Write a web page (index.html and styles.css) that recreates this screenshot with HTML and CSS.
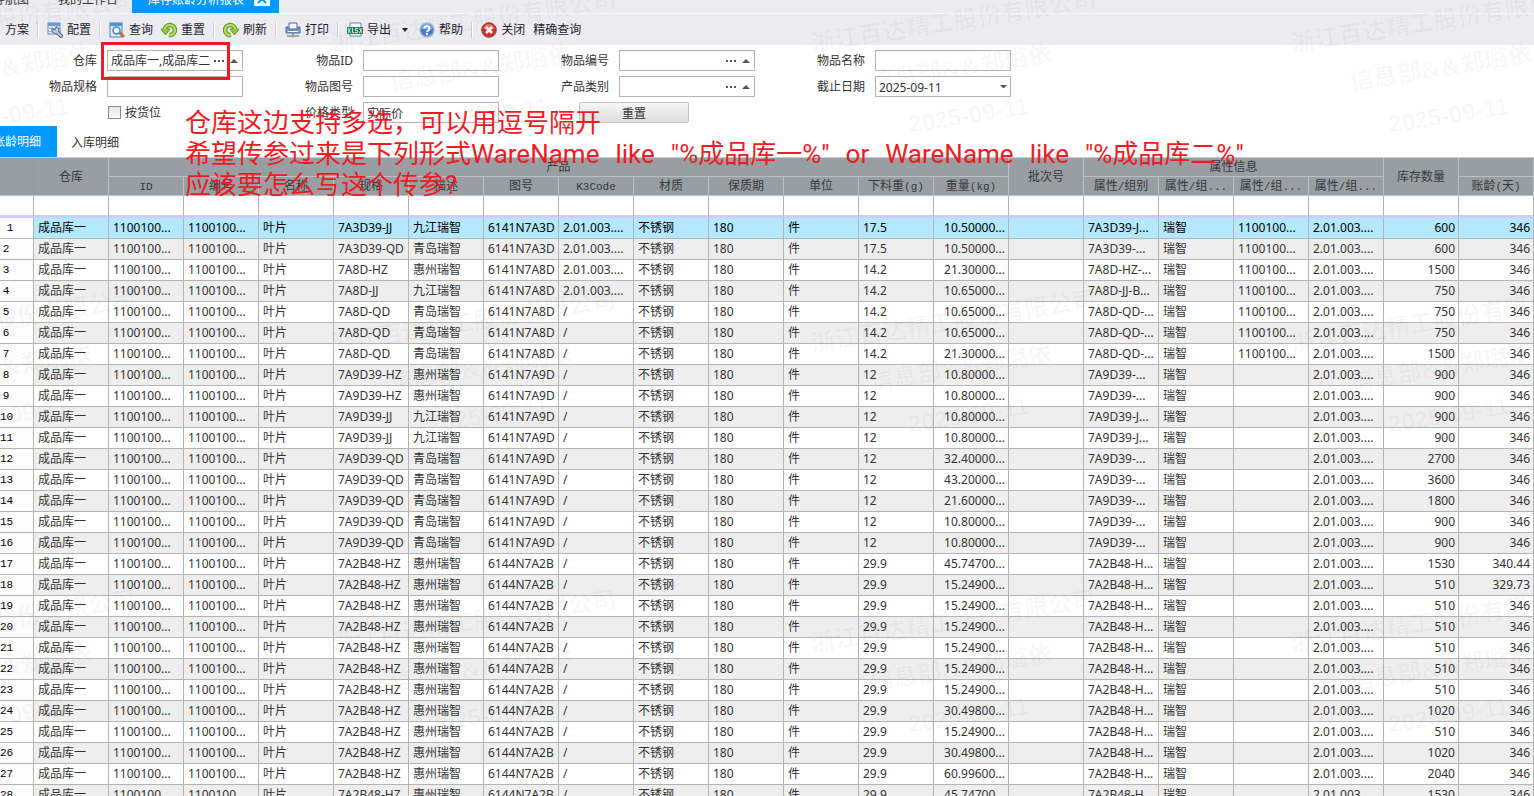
FILE: index.html
```
<!DOCTYPE html>
<html lang="zh-CN">
<head>
    <meta charset="UTF-8">
    <meta name="viewport" content="width=device-width, initial-scale=1.0">
    <title>库存账龄分析报表</title>
    <link rel="stylesheet" href="styles.css">
</head>
<body>
    <!-- Window tabs -->
    <nav class="window-tabs">
        <a href="#" class="window-tab">导航图</a>
        <a href="#" class="window-tab">我的工作台</a>
        <a href="#" class="window-tab active">库存账龄分析报表
            <svg class="icon" viewBox="0 0 16 16"><rect width="16" height="14" fill="#fff"/><path d="M4 3l8 8M12 3l-8 8" stroke="#0099ff" stroke-width="2"/></svg>
        </a>
    </nav>

    <!-- Toolbar -->
    <header class="toolbar">
        <button class="tool">方案</button>
        <span class="sep"></span>
        <button class="tool">
            <svg class="icon" viewBox="0 0 16 16"><rect x="1" y="1" width="12" height="11" fill="#eaf2fc" stroke="#7088b4"/><path d="M1 2.500h12" stroke="#6a9ade" stroke-width="3"/><path d="M1 6.500h12M1 9.500h12M5 3v9M9 3v9" stroke="#9db4d8"/><path d="M9 9l5 5" stroke="#5c6880" stroke-width="4" stroke-linecap="round"/><path d="M5 6l2 2 2-1V4.500a3.500 3.500 0 1 1-4 4z" fill="#c3d0e2" stroke="#5c6880"/><path d="M9 9l5 5" stroke="#b9c6da" stroke-width="2" stroke-linecap="round"/></svg>
            配置
        </button>
        <span class="sep"></span>
        <button class="tool">
            <svg class="icon" viewBox="0 0 16 16"><rect x="1" y="1" width="12" height="14" fill="#dcecfb" stroke="#4d80c0"/><path d="M1 2.500h12" stroke="#4d8fd8" stroke-width="3"/><path d="M11 11l3 3" stroke="#c07030" stroke-width="3" stroke-linecap="round"/><circle cx="7.500" cy="8.500" r="3.500" fill="#f1faff" stroke="#4888b8" stroke-width="1.500"/></svg>
            查询
        </button>
        <button class="tool">
            <svg class="icon" viewBox="0 0 16 16"><path d="M4 7a5 5 0 1 1 4 6" fill="none" stroke="#5c9420" stroke-width="4.500"/><path d="M0 7h9l-4.500 6z" fill="#8cc63c" stroke="#5c9420"/><path d="M4 8V7a5 5 0 1 1 4 6" fill="none" stroke="#b2dc60" stroke-width="2.500"/></svg>
            重置
        </button>
        <span class="sep"></span>
        <button class="tool">
            <svg class="icon" viewBox="0 0 16 16"><path d="M8 13a5 5 0 1 1 4-6" fill="none" stroke="#5c9420" stroke-width="4.500"/><path d="M7 7h9l-4.500 6z" fill="#8cc63c" stroke="#5c9420"/><path d="M8 13a5 5 0 1 1 4-6v1" fill="none" stroke="#b2dc60" stroke-width="2.500"/></svg>
            刷新
        </button>
        <span class="sep"></span>
        <button class="tool">
            <svg class="icon" viewBox="0 0 16 16"><path d="M4 1h8v6H4z" fill="#f6f9ff" stroke="#46659c"/><path d="M1 5h2v3h10V5h2v6H1z" fill="#8fabdc" stroke="#46659c"/><path d="M3 9.500h10" stroke="#fff"/><path d="M8 11v3M2 14h12" stroke="#7f8ea8" stroke-width="1.500"/><circle cx="8" cy="14" r="1.500" fill="#8bc34a"/></svg>
            打印
        </button>
        <span class="sep"></span>
        <button class="tool">
            <svg class="icon" viewBox="0 0 16 16"><path d="M3 1h11v13H3z" fill="#f8fbff" stroke="#5f86bf"/><rect y="5" width="16" height="7" fill="#128a5a"/><path d="M1 6l2.500 5M3.500 6L1 11M5.500 6v4.500h2M11 6.500H8.500v2h2v2H8M12.500 6l2.500 5M15 6l-2.500 5" fill="none" stroke="#fff" stroke-width=".8"/></svg>
            导出
        </button>
        <button class="tool-caret" aria-label="导出选项"><svg viewBox="0 0 6 4"><path d="M0 0h6L3 4z" fill="#1e1e2d"/></svg></button>
        <button class="tool">
            <svg class="icon" viewBox="0 0 16 16"><circle cx="8" cy="8" r="7" fill="#4a7fd0" stroke="#a9b9d2" stroke-width="1.500"/><path d="M2.500 7a5.500 5 0 0 1 11 0z" fill="#86aee8"/><path d="M5.500 6.500a2.500 2.300 0 1 1 3.500 2q-1 .5-1 1.500" fill="none" stroke="#fff" stroke-width="1.800"/><circle cx="8" cy="12" r="1.200" fill="#fff"/></svg>
            帮助
        </button>
        <span class="sep"></span>
        <button class="tool">
            <svg class="icon" viewBox="0 0 16 16"><circle cx="8" cy="8" r="7.300" fill="#d02c28" stroke="#a04040"/><path d="M2.500 7a5.500 5 0 0 1 11 0z" fill="#e4706a"/><path d="M5 5l6 6M11 5l-6 6" stroke="#fff" stroke-width="2.800"/></svg>
            关闭
        </button>
        <button class="tool">精确查询</button>
    </header>

    <!-- Query form -->
    <form class="filters">
        <div class="field">
            <label for="ware">仓库</label>
            <div class="box">
                <input type="text" id="ware" value="成品库一,成品库二">
                <button type="button" class="dots" aria-label="选择"><svg viewBox="0 0 12 2"><path d="M1 0h2v2H1zM5 0h2v2H5zM9 0h2v2H9z"/></svg></button>
                <button type="button" class="arrow" aria-label="收起"><svg viewBox="0 0 8 4"><path d="M0 4h8L4 0z"/></svg></button>
            </div>
        </div>
        <div class="field">
            <label for="goods-id">物品ID</label>
            <div class="box"><input type="text" id="goods-id"></div>
        </div>
        <div class="field">
            <label for="goods-code">物品编号</label>
            <div class="box">
                <input type="text" id="goods-code">
                <button type="button" class="dots" aria-label="选择"><svg viewBox="0 0 12 2"><path d="M1 0h2v2H1zM5 0h2v2H5zM9 0h2v2H9z"/></svg></button>
                <button type="button" class="arrow" aria-label="收起"><svg viewBox="0 0 8 4"><path d="M0 4h8L4 0z"/></svg></button>
            </div>
        </div>
        <div class="field">
            <label for="goods-name">物品名称</label>
            <div class="box"><input type="text" id="goods-name"></div>
        </div>

        <div class="field">
            <label for="goods-spec">物品规格</label>
            <div class="box"><input type="text" id="goods-spec"></div>
        </div>
        <div class="field">
            <label for="drawing">物品图号</label>
            <div class="box"><input type="text" id="drawing"></div>
        </div>
        <div class="field">
            <label for="category">产品类别</label>
            <div class="box">
                <input type="text" id="category">
                <button type="button" class="dots" aria-label="选择"><svg viewBox="0 0 12 2"><path d="M1 0h2v2H1zM5 0h2v2H5zM9 0h2v2H9z"/></svg></button>
                <button type="button" class="arrow" aria-label="收起"><svg viewBox="0 0 8 4"><path d="M0 4h8L4 0z"/></svg></button>
            </div>
        </div>
        <div class="field">
            <label for="end-date">截止日期</label>
            <div class="box">
                <select id="end-date"><option>2025-09-11</option></select>
                <svg class="caret" viewBox="0 0 8 4"><path d="M0 0h8L4 4z"/></svg>
            </div>
        </div>

        <div class="field">
            <div class="check">
                <input type="checkbox" id="by-location">
                <label for="by-location">按货位</label>
            </div>
        </div>
        <div class="field">
            <label for="price-type">价格类型</label>
            <div class="box">
                <select id="price-type"><option>实际价</option></select>
                <svg class="caret" viewBox="0 0 8 4"><path d="M0 0h8L4 4z"/></svg>
            </div>
        </div>
        <div class="field start">
            <button type="reset" class="reset">重置</button>
        </div>
    </form>

    <!-- Sub tabs -->
    <nav class="sub-tabs">
        <a href="#" class="sub-tab active">账龄明细</a>
        <a href="#" class="sub-tab">入库明细</a>
    </nav>

    <!-- Data grid -->
    <table class="grid">
        <thead>
            <tr>
                <th class="row-no" rowspan="2"></th>
                <th rowspan="2">仓库</th>
                <th colspan="12">产品</th>
                <th rowspan="2">批次号</th>
                <th colspan="4">属性信息</th>
                <th rowspan="2">库存数量</th>
                <th></th>
            </tr>
            <tr>
                <th><span class="half">ID</span></th>
                <th>编号</th>
                <th>名称</th>
                <th>规格</th>
                <th>描述</th>
                <th>图号</th>
                <th><span class="half">K3Code</span></th>
                <th>材质</th>
                <th>保质期</th>
                <th>单位</th>
                <th>下料重<span class="half">(g)</span></th>
                <th>重量<span class="half">(kg)</span></th>
                <th>属性<span class="half">/</span>组别</th>
                <th>属性<span class="half">/</span>组<span class="half">...</span></th>
                <th>属性<span class="half">/</span>组<span class="half">...</span></th>
                <th>属性<span class="half">/</span>组<span class="half">...</span></th>
                <th>账龄<span class="half">(</span>天<span class="half">)</span></th>
            </tr>
        </thead>
        <tbody id="grid-body">
            <!-- Rows are inserted here -->
        </tbody>
    </table>

    <!-- Watermark -->
    <div class="watermark" aria-hidden="true">
        <div class="stamps" id="stamps"></div>
    </div>

    <!-- Red notes -->
    <div class="mark-box"></div>
    <div class="note">
        <p><span>仓库这边支持多选，可以用逗号隔开</span></p>
        <p><span>希望传参过来是下列形式WareName</span><span>like</span><span>"%成品库一%"</span><span>or</span><span>WareName</span><span>like</span><span>"%成品库二%"</span></p>
        <p><span>应该要怎么写这个传参?</span></p>
    </div>

    <script>
        const k3 = '2.01.003....';
        const code = '1100100...';

        // spec, description, drawing no, K3Code, blank weight, weight, attribute 1, attribute 3, quantity, age
        const rows = [
            ['7A3D39-JJ', '九江瑞智', '6141N7A3D', k3, '17.5', '10.50000...', '7A3D39-J...', code, 600, '346'],
            ['7A3D39-QD', '青岛瑞智', '6141N7A3D', k3, '17.5', '10.50000...', '7A3D39-...', code, 600, '346'],
            ['7A8D-HZ', '惠州瑞智', '6141N7A8D', k3, '14.2', '21.30000...', '7A8D-HZ-...', code, 1500, '346'],
            ['7A8D-JJ', '九江瑞智', '6141N7A8D', k3, '14.2', '10.65000...', '7A8D-JJ-B...', code, 750, '346'],
            ['7A8D-QD', '青岛瑞智', '6141N7A8D', '/', '14.2', '10.65000...', '7A8D-QD-...', code, 750, '346'],
            ['7A8D-QD', '青岛瑞智', '6141N7A8D', '/', '14.2', '10.65000...', '7A8D-QD-...', code, 750, '346'],
            ['7A8D-QD', '青岛瑞智', '6141N7A8D', '/', '14.2', '21.30000...', '7A8D-QD-...', code, 1500, '346'],
            ['7A9D39-HZ', '惠州瑞智', '6141N7A9D', '/', '12', '10.80000...', '7A9D39-...', '', 900, '346'],
            ['7A9D39-HZ', '惠州瑞智', '6141N7A9D', '/', '12', '10.80000...', '7A9D39-...', '', 900, '346'],
            ['7A9D39-JJ', '九江瑞智', '6141N7A9D', '/', '12', '10.80000...', '7A9D39-J...', '', 900, '346'],
            ['7A9D39-JJ', '九江瑞智', '6141N7A9D', '/', '12', '10.80000...', '7A9D39-J...', '', 900, '346'],
            ['7A9D39-QD', '青岛瑞智', '6141N7A9D', '/', '12', '32.40000...', '7A9D39-...', '', 2700, '346'],
            ['7A9D39-QD', '青岛瑞智', '6141N7A9D', '/', '12', '43.20000...', '7A9D39-...', '', 3600, '346'],
            ['7A9D39-QD', '青岛瑞智', '6141N7A9D', '/', '12', '21.60000...', '7A9D39-...', '', 1800, '346'],
            ['7A9D39-QD', '青岛瑞智', '6141N7A9D', '/', '12', '10.80000...', '7A9D39-...', '', 900, '346'],
            ['7A9D39-QD', '青岛瑞智', '6141N7A9D', '/', '12', '10.80000...', '7A9D39-...', '', 900, '346'],
            ['7A2B48-HZ', '惠州瑞智', '6144N7A2B', '/', '29.9', '45.74700...', '7A2B48-H...', '', 1530, '340.44'],
            ['7A2B48-HZ', '惠州瑞智', '6144N7A2B', '/', '29.9', '15.24900...', '7A2B48-H...', '', 510, '329.73'],
            ['7A2B48-HZ', '惠州瑞智', '6144N7A2B', '/', '29.9', '15.24900...', '7A2B48-H...', '', 510, '346'],
            ['7A2B48-HZ', '惠州瑞智', '6144N7A2B', '/', '29.9', '15.24900...', '7A2B48-H...', '', 510, '346'],
            ['7A2B48-HZ', '惠州瑞智', '6144N7A2B', '/', '29.9', '15.24900...', '7A2B48-H...', '', 510, '346'],
            ['7A2B48-HZ', '惠州瑞智', '6144N7A2B', '/', '29.9', '15.24900...', '7A2B48-H...', '', 510, '346'],
            ['7A2B48-HZ', '惠州瑞智', '6144N7A2B', '/', '29.9', '15.24900...', '7A2B48-H...', '', 510, '346'],
            ['7A2B48-HZ', '惠州瑞智', '6144N7A2B', '/', '29.9', '30.49800...', '7A2B48-H...', '', 1020, '346'],
            ['7A2B48-HZ', '惠州瑞智', '6144N7A2B', '/', '29.9', '15.24900...', '7A2B48-H...', '', 510, '346'],
            ['7A2B48-HZ', '惠州瑞智', '6144N7A2B', '/', '29.9', '30.49800...', '7A2B48-H...', '', 1020, '346'],
            ['7A2B48-HZ', '惠州瑞智', '6144N7A2B', '/', '29.9', '60.99600...', '7A2B48-H...', '', 2040, '346'],
            ['7A2B48-HZ', '惠州瑞智', '6144N7A2B', '/', '29.9', '45.74700...', '7A2B48-H...', '', 1530, '346']
        ];

        // Empty filter row first, then the data
        let html = '<tr class="filter-row"><td class="row-no"></td>' + '<td></td>'.repeat(20) + '</tr>';
        rows.forEach((r, i) => {
            html += `<tr class="${i === 0 ? 'selected' : ''}">
                        <td class="row-no"><span>${i + 1}</span></td>
                        <td>成品库一</td>
                        <td>${code}</td>
                        <td>${code}</td>
                        <td>叶片</td>
                        <td>${r[0]}</td>
                        <td>${r[1]}</td>
                        <td>${r[2]}</td>
                        <td>${r[3]}</td>
                        <td>不锈钢</td>
                        <td>180</td>
                        <td>件</td>
                        <td>${r[4]}</td>
                        <td class="num">${r[5]}</td>
                        <td></td>
                        <td>${r[6]}</td>
                        <td>瑞智</td>
                        <td>${r[7]}</td>
                        <td>${k3}</td>
                        <td class="num">${r[8]}</td>
                        <td class="num">${r[9]}</td>
                    </tr>`;
        });
        document.getElementById('grid-body').innerHTML = html;

        const stamp = '<div class="stamp"><p>浙江百达精工股份有限公司</p><p>信息部&amp;&amp;郑璐依</p><p class="date">2025-09-11</p></div>';
        document.getElementById('stamps').innerHTML = stamp.repeat(12);
    </script>
</body>
</html>
```
FILE: styles.css
```
/* General styling */
* {
    box-sizing: border-box;
}

body {
    position: relative;
    margin: 0;
    height: 100vh;
    overflow: hidden;
    background-color: #fff;
    color: #333;
    font-family: "Noto Sans", "Noto Sans CJK SC", sans-serif;
    font-size: 12px;
    line-height: 20px;
}

button, input, select {
    font: inherit;
    color: inherit;
}

button {
    padding: 0;
    border: none;
    background: none;
    cursor: pointer;
}

a {
    color: inherit;
    text-decoration: none;
}

p {
    margin: 0;
}

.icon {
    width: 16px;
    height: 16px;
    flex: none;
}

/* Window tabs */
.window-tabs {
    display: flex;
    align-items: flex-end;
    height: 14px;
    overflow: hidden;
    background-color: #ebebf0;
    border-bottom: 1px solid #f8f8fa;
}

.window-tab {
    display: flex;
    align-items: center;
    flex: none;
    height: 26px;
    padding: 0 14px 0 15px;
    white-space: nowrap;
}

.window-tab:first-child {
    margin-left: -22px;
}

.window-tab.active {
    gap: 10px;
    padding: 0 9px 0 16px;
    background-color: #0099ff;
    color: #fff;
}

/* Toolbar */
.toolbar {
    display: flex;
    align-items: center;
    gap: 8px;
    height: 31px;
    padding-left: 5px;
    background-color: #ebebf0;
    color: #1e1e2d;
}

.tool {
    display: flex;
    align-items: center;
    gap: 4px;
    flex: none;
    white-space: nowrap;
}

.tool-caret {
    display: flex;
    justify-content: center;
    width: 12px;
}

.tool-caret svg {
    width: 6px;
    height: 4px;
}

.sep {
    width: 2px;
    height: 16px;
    background-color: #ccccd2;
    border-right: 1px solid #fff;
}

/* Query form */
.filters {
    display: grid;
    grid-template-columns: 243px repeat(3, 256px);
    grid-auto-rows: 21px;
    row-gap: 5px;
    padding: 5px 0 3px;
    line-height: 22px;
}

.field {
    display: flex;
    align-items: center;
    justify-content: flex-end;
    gap: 10px;
}

.field.start {
    justify-content: flex-start;
    padding-left: 80px;
}

.box {
    display: flex;
    align-items: center;
    position: relative;
    width: 136px;
    height: 21px;
    border: 1px solid #b4b4b4;
    background-color: #fff;
}

.box input, .box select {
    flex: 1;
    min-width: 0;
    height: 19px;
    padding: 0 3px;
    border: none;
    outline: none;
    background: none;
    appearance: none;
}

.box svg {
    display: block;
    fill: #555;
}

.dots {
    width: 12px;
}

.arrow {
    width: 8px;
    margin: 0 4px 0 5px;
}

.caret {
    position: absolute;
    right: 3px;
    width: 7px;
    pointer-events: none;
}

.check {
    display: flex;
    align-items: center;
    gap: 4px;
    width: 136px;
}

.check input {
    appearance: none;
    width: 13px;
    height: 13px;
    margin: 0 0 0 1px;
    border: 1px solid #8c8c8c;
    background: linear-gradient(#e6e6e6, #fafafa);
}

.reset {
    width: 110px;
    height: 21px;
    border: 1px solid #c3c3c3;
    border-radius: 2px;
    background: linear-gradient(#f6f6f6, #dedede);
}

/* Sub tabs */
.sub-tabs {
    display: flex;
    height: 31px;
}

.sub-tab {
    height: 31px;
    padding: 0 14px;
    line-height: 34px;
}

.sub-tab.active {
    margin-left: -23px;
    padding: 0 16px;
    background-color: #0099ff;
    color: #fff;
    line-height: 32px;
}

/* Data grid */
.grid {
    width: 100%;
    table-layout: fixed;
    border-collapse: separate;
    border-spacing: 0;
    border-top: 1px solid #c8cccf;
}

.grid th, .grid td {
    height: 21px;
    padding: 0 4px;
    border-right: 1px solid #b4b4b4;
    border-bottom: 1px solid #b4b4b4;
    line-height: 20px;
    white-space: nowrap;
    overflow: hidden;
}

.grid th {
    height: 19px;
    border-color: #bcc0c3;
    background-color: #999ea2;
    color: #37393b;
    font-weight: normal;
    line-height: 18px;
}

.grid .row-no {
    width: 34px;
    padding: 0;
}

th.row-no {
    border-right-color: #92979b;
}

td.row-no {
    background-color: #fcfcfc;
    color: #000;
}

td.row-no span {
    display: block;
    width: 12px;
    font-family: "Liberation Mono", monospace;
    font-size: 11px;
    line-height: 18px;
    text-align: center;
}

.half {
    font-family: "Liberation Mono", monospace;
    font-size: 11px;
    line-height: 12px;
}

.grid .num {
    padding: 0 3px;
    text-align: right;
}

.grid .filter-row td {
    height: 22px;
    border-bottom: 3px solid #ccccff;
}

tbody tr:nth-child(odd) td:not(.row-no) {
    background-color: #eee;
}

tbody tr.filter-row td:not(.row-no) {
    background-color: #fff;
}

.selected {
    color: #000;
}

tbody tr.selected td:not(.row-no) {
    background-color: #b3e8ff;
}

.selected .row-no span {
    margin-left: 4px;
}

/* Watermark */
.watermark {
    position: absolute;
    inset: 0;
    overflow: hidden;
    pointer-events: none;
}

.stamps {
    position: absolute;
    top: -82px;
    left: -239px;
    display: grid;
    grid-template-columns: repeat(4, 480px);
    grid-auto-rows: 300px;
    color: rgba(0, 0, 0, 0.03);
    font-family: "Liberation Serif", "Noto Sans CJK SC", serif;
    font-size: 24px;
    font-weight: bold;
    line-height: 47px;
    text-align: center;
}

.stamp {
    align-self: center;
    transform: rotate(-9deg);
}

.stamp .date {
    font-family: "Liberation Sans", sans-serif;
}

/* Red notes */
.mark-box {
    position: absolute;
    top: 42px;
    left: 101px;
    width: 129px;
    height: 38px;
    border: 3px solid #ed1c24;
    pointer-events: none;
}

.note {
    position: absolute;
    top: 108px;
    left: 185px;
    color: #ed1c24;
    font-family: Roboto, "Noto Sans CJK SC", sans-serif;
    font-size: 26px;
    line-height: 31px;
    white-space: nowrap;
    pointer-events: none;
}

.note p {
    display: flex;
    gap: 16px;
}
```
